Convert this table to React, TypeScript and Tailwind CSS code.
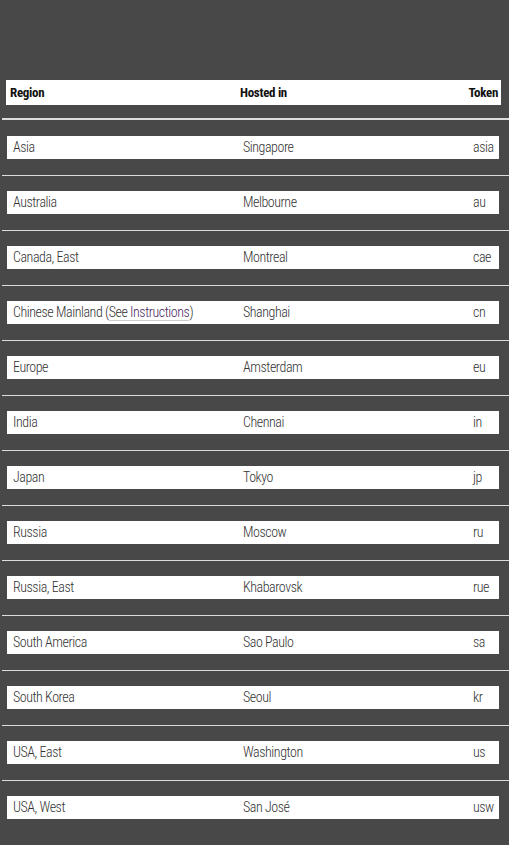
const rows: [string, string, string][] = [
  ["Asia", "Singapore", "asia"],
  ["Australia", "Melbourne", "au"],
  ["Canada, East", "Montreal", "cae"],
  ["Chinese Mainland", "Shanghai", "cn"],
  ["Europe", "Amsterdam", "eu"],
  ["India", "Chennai", "in"],
  ["Japan", "Tokyo", "jp"],
  ["Russia", "Moscow", "ru"],
  ["Russia, East", "Khabarovsk", "rue"],
  ["South America", "Sao Paulo", "sa"],
  ["South Korea", "Seoul", "kr"],
  ["USA, East", "Washington", "us"],
  ["USA, West", "San José", "usw"],
];

const font = {
  fontFamily: '"Roboto Condensed", "Liberation Sans Narrow", "DejaVu Sans Condensed", sans-serif',
};

export default function App() {
  return (
    <div className="min-h-[845px] bg-[#484848] pt-[80px]" style={font}>
      <div className="ml-[6px] mr-[8px] flex h-[25px] items-center bg-white pl-[4px] pr-[3px] text-[13px] font-bold tracking-[-0.3px] text-[#111]">
        <span className="w-[230px]">Region</span>
        <span className="flex-1">Hosted in</span>
        <span>Token</span>
      </div>
      <div className="mt-[13px] ml-[2px] h-[2px] bg-[#dcdcdc]" />
      {rows.map(([region, city, token], i) => (
        <div key={token}>
          {i > 0 && <div className="ml-[2px] h-px bg-[#dcdcdc]" />}
          <div className={`${i > 0 ? "pt-[15px]" : "pt-[16px]"} pb-[16px] pl-[7px] pr-[10px]`}>
            <div className="flex h-[23px] items-center bg-white pl-[6px] text-[14px] font-light tracking-[-0.45px] text-[#333]">
              <span className="w-[230px]">
                {region}
                {token === "cn" && (
                  <>
                    {" ("}
                    <a className="border-b border-[#ccc] text-[#4b2a63]">
                      <span className="text-[#333]">See </span>Instructions
                    </a>
                    {")"}
                  </>
                )}
              </span>
              <span className="w-[230px]">{city}</span>
              <span>{token}</span>
            </div>
          </div>
        </div>
      ))}
    </div>
  );
}
